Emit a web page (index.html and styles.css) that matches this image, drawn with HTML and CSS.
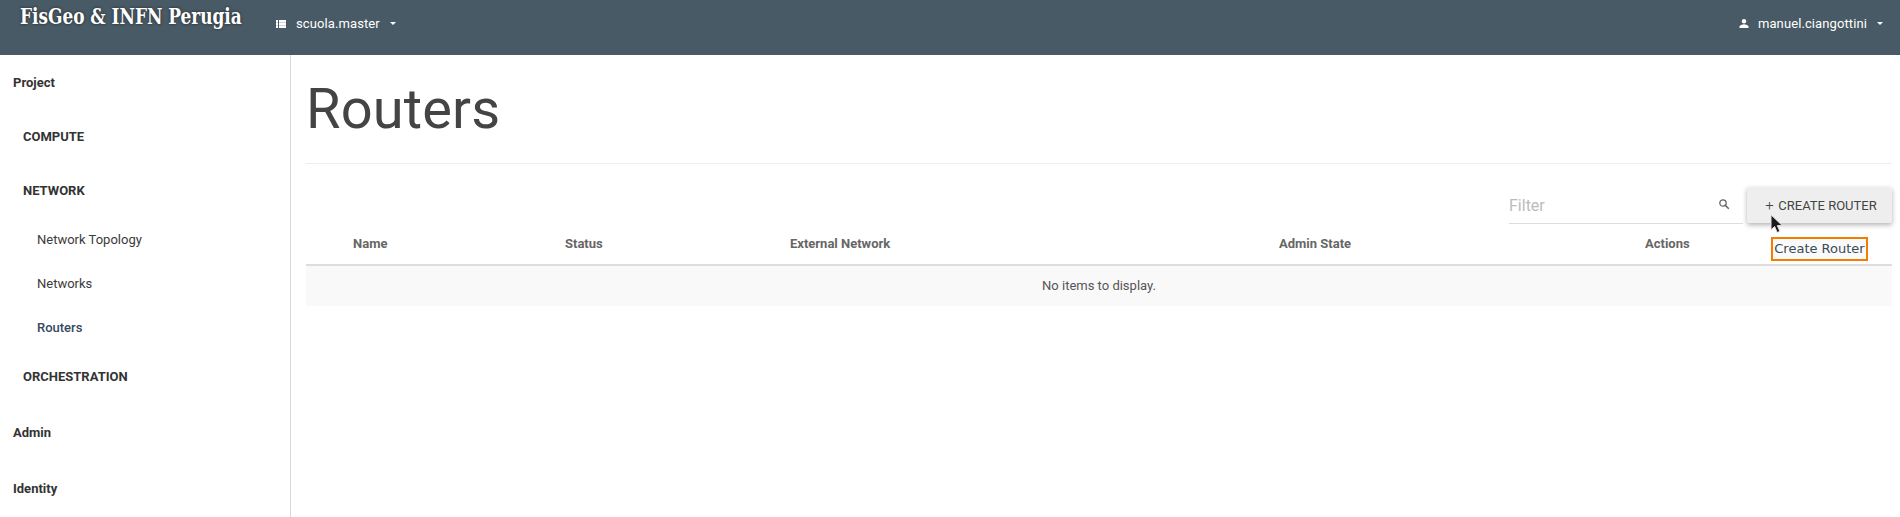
FILE: index.html
```html
<!DOCTYPE html>
<html lang="en">
<head>
<meta charset="utf-8">
<title>Routers</title>
<link rel="stylesheet" href="styles.css">
</head>
<body>
<header class="topbar">
  <div class="brand">FisGeo &amp; INFN Perugia</div>
  <div class="project">
    <svg class="icon-list" viewBox="0 0 10 8" width="10" height="8"><path d="M0 0h2v2.400H0zM3 0h7v2.400H3zM0 2.800h2v2.400H0zM3 2.800h7v2.400H3zM0 5.600h2V8H0zM3 5.600h7V8H3z" fill="#fff"/></svg>
    <span>scuola.master</span>
    <i class="caret"></i>
  </div>
  <div class="user">
    <svg class="icon-user" viewBox="0 0 10 9" width="10" height="9"><circle cx="5" cy="2.200" r="2.200" fill="#fff"/><path d="M0.500 9V7.500C0.500 6.200 3.200 5.200 5 5.200s4.500 1 4.500 2.300V9z" fill="#fff"/></svg>
    <span>manuel.ciangottini</span>
    <i class="caret"></i>
  </div>
</header>
<div class="shell">
  <nav class="sidebar">
    <a class="nav-top first">Project</a>
    <a class="nav-group">COMPUTE</a>
    <a class="nav-group">NETWORK</a>
    <a class="nav-item first-item">Network Topology</a>
    <a class="nav-item">Networks</a>
    <a class="nav-item active">Routers</a>
    <a class="nav-group orch">ORCHESTRATION</a>
    <a class="nav-top admin">Admin</a>
    <a class="nav-top identity">Identity</a>
  </nav>
  <main class="content">
    <h1 class="title">Routers</h1>
    <div class="toolbar">
      <div class="filter">
        <span class="filter-label">Filter</span>
        <svg class="icon-search" viewBox="0 0 12 12" width="12" height="12"><circle cx="5" cy="5" r="3.200" fill="none" stroke="#666" stroke-width="1.300"/><path d="M7.500 7.500l3.300 3.300" stroke="#666" stroke-width="1.600"/></svg>
      </div>
      <button class="create-btn"><span class="plus">+</span>CREATE ROUTER</button>
    </div>
    <div class="table-head">
      <span></span>
      <span>Name</span>
      <span>Status</span>
      <span>External Network</span>
      <span>Admin State</span>
      <span>Actions</span>
    </div>
    <div class="table-empty">No items to display.</div>
    <div class="callout">Create Router</div>
    <svg class="cursor" viewBox="0 0 13 20" width="13" height="20"><path d="M1 0.800v15l3.600-3.300 2.600 6 2.700-1.200-2.600-5.700h5z" fill="#1a1a1a" stroke="#e4e4e4" stroke-width="1"/></svg>
  </main>
</div>
</body>
</html>
```
FILE: styles.css
```css
* { box-sizing: border-box; }
html, body { margin: 0; height: 517px; overflow: hidden; background: #fff; }
body { font-family: Roboto, "Liberation Sans", sans-serif; color: #444; }

.topbar {
  height: 55px;
  background: #485a65;
  display: flex;
  align-items: flex-start;
  color: #fff;
  font-size: 13px;
}
.brand {
  width: 276px;
  flex: none;
  padding: 3px 0 0 20px;
  font-family: "DejaVu Serif Condensed", "DejaVu Serif", serif;
  font-weight: 700;
  font-size: 21.500px;
  line-height: 28px;
  white-space: nowrap;
  text-shadow: 0 0 3px #222;
  transform: scaleX(0.875);
  transform-origin: 20px 0;
}
.project, .user {
  display: flex;
  align-items: center;
  height: 15px;
  margin-top: 16px;
  letter-spacing: 0.1px;
}
.icon-list { margin-right: 10px; }
.user { margin-left: auto; margin-right: 17px; margin-top: 16px; }
.icon-user { margin-right: 9px; }
.caret {
  display: block;
  width: 0;
  height: 0;
  margin-left: 10px;
  border-left: 3.500px solid transparent;
  border-right: 3.500px solid transparent;
  border-top: 3.500px solid #fff;
}

.shell { display: flex; height: 462px; }
.sidebar {
  width: 291px;
  flex: none;
  border-right: 1px solid #d8d8d8;
  display: flex;
  flex-direction: column;
  font-size: 13px;
  color: #333;
}
.nav-top, .nav-group { font-weight: 700; color: #333; line-height: 16px; }
.nav-top { padding-left: 13px; }
.nav-top.first { margin-top: 20px; }
.nav-group { padding-left: 23px; margin-top: 38px; }
.nav-group.orch { margin-top: 33px; }
.nav-item { padding-left: 37px; line-height: 16px; margin-top: 28px; color: #3b3b3b; }
.nav-item.first-item { margin-top: 33px; }
.nav-item.active { color: #34495e; font-weight: 500; }
.nav-top.admin { margin-top: 40px; }
.nav-top.identity { margin-top: 40px; }

.content { flex: 1; position: relative; padding: 0 8px 0 15px; min-width: 0; }
.title {
  margin: 0;
  height: 109px;
  padding-top: 21px;
  font-weight: 400;
  font-size: 56px;
  line-height: 66px;
  letter-spacing: 0.150px;
  color: #444;
  border-bottom: 1px solid #eee;
}
.toolbar {
  display: flex;
  justify-content: flex-end;
  align-items: flex-start;
  height: 67px;
  padding-top: 23px;
}
.filter {
  width: 234px;
  height: 37px;
  border-bottom: 1px solid #ddd;
  display: flex;
  align-items: center;
  justify-content: space-between;
  padding: 0 13px 0 0;
  margin-right: 4px;
}
.filter-label { font-size: 16px; color: #bbb; }
.icon-search { margin-top: -3px; }
.create-btn {
  width: 145px;
  height: 36px;
  border: 0;
  border-radius: 2px;
  background: #eee;
  box-shadow: 0 2px 5px rgba(0,0,0,.3);
  font-family: inherit;
  font-size: 13px;
  color: #444;
  padding: 0 0 0 3px;
}
.plus { font-size: 15px; font-weight: 300; margin-right: 4.500px; }
.table-head {
  display: grid;
  grid-template-columns: 47px 212px 225px 489px 366px 1fr;
  height: 35px;
  border-bottom: 2px solid #ddd;
  font-size: 13px;
  font-weight: 700;
  color: #666;
  line-height: 16px;
  padding-top: 5px;
}
.table-empty {
  height: 40px;
  background: #f9f9f9;
  font-size: 13px;
  line-height: 40px;
  text-align: center;
  color: #555;
}
.callout {
  position: absolute;
  left: 1480px;
  top: 182px;
  width: 97px;
  height: 24px;
  border: 2px solid #f57c00;
  font-family: "DejaVu Sans", sans-serif;
  font-size: 13px;
  line-height: 20px;
  text-align: center;
  color: #3a4a55;
  background: #fafafa;
  white-space: nowrap;
}
.cursor { position: absolute; left: 1479px; top: 159px; }
```
